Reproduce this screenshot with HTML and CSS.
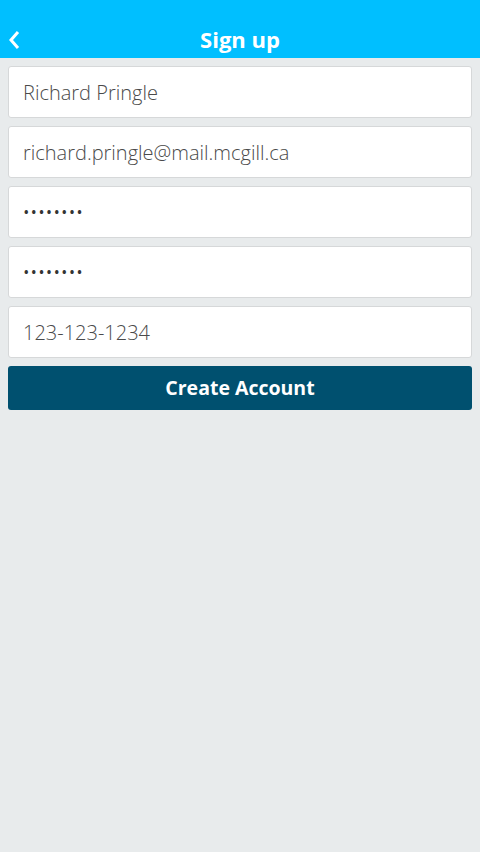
FILE: index.html
```html
<!DOCTYPE html>
<html>
<head>
<meta charset="utf-8">
<link rel="stylesheet" href="styles.css">
</head>
<body>
<header class="bar">
  <button class="back" aria-label="Back">
    <svg width="12" height="20" viewBox="0 0 12 20"><path d="M10 2 L3 10 L10 18" fill="none" stroke="#fff" stroke-width="3"/></svg>
  </button>
  <h1 class="title">Sign up</h1>
</header>
<main class="form">
  <div class="field">Richard Pringle</div>
  <div class="field">richard.pringle@mail.mcgill.ca</div>
  <div class="field dots">••••••••</div>
  <div class="field dots">••••••••</div>
  <div class="field">123-123-1234</div>
  <button class="submit">Create Account</button>
</main>
</body>
</html>
```
FILE: styles.css
```css
html, body {
  margin: 0;
  padding: 0;
  height: 100%;
}
body {
  background: #e8ebec;
  font-family: "Open Sans", sans-serif;
}
.bar {
  height: 58px;
  background: #00bfff;
  display: flex;
  align-items: flex-end;
  justify-content: center;
  position: relative;
}
.back {
  position: absolute;
  left: 7px;
  top: 29px;
  background: none;
  border: 0;
  padding: 0;
  width: 14px;
  height: 22px;
  display: flex;
  align-items: center;
  justify-content: center;
}
.title {
  margin: 0 0 4px;
  color: #fff;
  font-size: 22px;
  font-weight: 700;
  line-height: 30px;
}
.form {
  padding: 8px 8px;
  display: flex;
  flex-direction: column;
  gap: 8px;
}
.field {
  height: 50px;
  background: #fff;
  border: 1px solid #d6d8d9;
  border-radius: 3px;
  display: flex;
  align-items: center;
  padding-left: 14px;
  font-size: 20px;
  font-weight: 300;
  color: #4a4a4a;
}
.dots {
  font-size: 12px;
  letter-spacing: 3.1px;
  color: #333;
  font-weight: 700;
  padding-bottom: 0;
  padding-left: 15px;
  box-sizing: border-box;
  height: 52px;
}
.submit {
  height: 44px;
  border: 0;
  border-radius: 3px;
  background: #00506f;
  color: #fff;
  font-family: "Open Sans", sans-serif;
  font-weight: 700;
  font-size: 19.5px;
  padding-bottom: 2px;
}
```
